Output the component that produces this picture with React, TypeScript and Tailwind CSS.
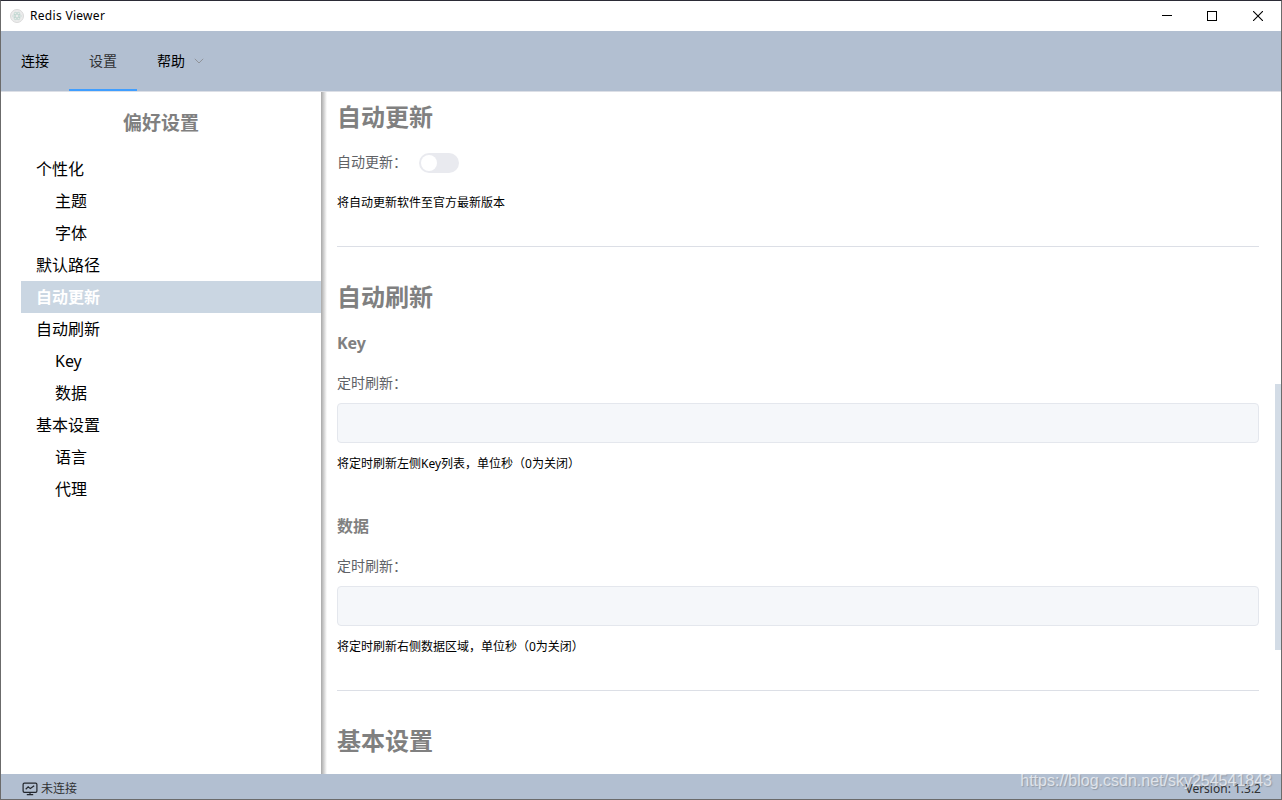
import { ReactNode } from "react";

const menus = [
    { label: "连接", active: false },
    { label: "设置", active: true },
];

const sections = [
    { label: "个性化", level: 1 },
    { label: "主题", level: 2 },
    { label: "字体", level: 2 },
    { label: "默认路径", level: 1 },
    { label: "自动更新", level: 1, active: true },
    { label: "自动刷新", level: 1 },
    { label: "Key", level: 2 },
    { label: "数据", level: 2 },
    { label: "基本设置", level: 1 },
    { label: "语言", level: 2 },
    { label: "代理", level: 2 },
];

const AppLogo = () => (
    <svg width="14" height="14" viewBox="0 0 14 14" fill="none">
        <circle cx="7" cy="7" r="6.5" fill="#ececec" stroke="#dadada" />
        <g stroke="#b9d3cc" strokeWidth="0.6">
            <ellipse cx="7" cy="7" rx="4.4" ry="1.8" />
            <ellipse cx="7" cy="7" rx="4.4" ry="1.8" transform="rotate(60 7 7)" />
            <ellipse cx="7" cy="7" rx="4.4" ry="1.8" transform="rotate(120 7 7)" />
        </g>
    </svg>
);

const MonitorIcon = () => (
    <svg width="16" height="14" viewBox="0 0 16 14" fill="none" stroke="#23272d" strokeWidth="1.2">
        <rect x="1.1" y="1.1" width="13.8" height="9.3" rx="1.3" />
        <path d="M3.7 7.3 6.2 4.9 8.3 6.6 12.2 3.8" />
        <path d="M8 10.4v2.2M4.8 12.7h6.4" />
    </svg>
);

const TitleBar = () => (
    <header className="flex h-[30px] shrink-0 items-center bg-white pl-[9px]">
        <AppLogo />
        <span className="ml-[6px] text-[12px] leading-[30px] tracking-[0.3px] text-black">Redis Viewer</span>
        <div className="ml-auto flex">
            <div className="flex h-[30px] w-[46px] items-center justify-center pl-px">
                <svg width="10" height="10" stroke="#000" shapeRendering="crispEdges">
                    <path d="M0 4.5h10" />
                </svg>
            </div>
            <div className="flex h-[30px] w-[46px] items-center justify-center">
                <svg width="10" height="10" fill="none" stroke="#000" shapeRendering="crispEdges">
                    <rect x="0.5" y="0.5" width="9" height="9" />
                </svg>
            </div>
            <div className="flex h-[30px] w-[46px] items-center justify-center">
                <svg width="10" height="10" stroke="#000" strokeWidth="1.1">
                    <path d="M0 0 10 10M10 0 0 10" />
                </svg>
            </div>
        </div>
    </header>
);

const NavBar = () => (
    <nav className="flex h-[61px] shrink-0 border-b border-[#dcdfe6] bg-[#b2bfd1] text-[14px] leading-[60px]">
        {menus.map((menu) => (
            <div
                key={menu.label}
                className={
                    menu.active
                        ? "h-[60px] border-b-2 border-[#409eff] px-5 text-[#303133]"
                        : "h-[60px] px-5 text-black"
                }
            >
                {menu.label}
            </div>
        ))}
        <div className="flex h-[60px] items-center px-5 text-black">
            帮助
            <svg className="ml-[9px]" width="10" height="6" fill="none" stroke="#909399">
                <path d="M0.8 0.8 5 5 9.2 0.8" />
            </svg>
        </div>
    </nav>
);

const Sidebar = () => (
    <aside className="w-[320px] shrink-0 bg-white pl-5">
        <h2 className="mt-[15px] mb-[14px] -ml-5 text-center text-[19px] font-bold leading-8 text-[#808080]">
            偏好设置
        </h2>
        <ul className="text-[16px] leading-8 text-black">
            {sections.map((item) => (
                <li
                    key={item.label}
                    className={
                        item.active
                            ? "h-8 bg-[#cad6e2] pl-[15px] font-bold text-white"
                            : item.level === 1
                              ? "h-8 pl-[15px]"
                              : "h-8 pl-[34px]"
                    }
                >
                    {item.label}
                </li>
            ))}
        </ul>
    </aside>
);

const Title = ({ children }: { children: ReactNode }) => (
    <h1 className="text-[24px] font-bold leading-8 text-[#808080]">{children}</h1>
);

const IntervalField = ({ title, hint }: { title: string; hint: string }) => (
    <div>
        <h3 className="text-[16px] font-bold leading-6 text-[#808080]">{title}</h3>
        <div className="mt-2 text-[14px] leading-10 text-[#606266]">定时刷新：</div>
        <input
            disabled
            className="block h-10 w-full rounded-[4px] border border-[#e4e7ed] bg-[#f5f7fa]"
        />
        <p className="mt-[11px] text-[12px] leading-5 text-black">{hint}</p>
    </div>
);

const Preferences = () => (
    <main className="min-w-0 flex-1 overflow-hidden pt-[9px] pr-4 pl-[10px]">
        <Title>自动更新</Title>
        <div className="mt-[9px] flex h-10 items-center text-[14px] leading-10 text-[#606266]">
            <span className="w-[82px]">自动更新：</span>
            <span className="mt-px flex h-5 w-10 items-center rounded-full bg-[#e9eaef] pl-[2px]">
                <span className="size-4 rounded-full bg-white" />
            </span>
        </div>
        <p className="mt-[11px] text-[12px] leading-5 text-black">将自动更新软件至官方最新版本</p>
        <hr className="mt-[33px] mb-[34px] border-[#dcdfe6]" />

        <Title>自动刷新</Title>
        <div className="mt-[18px]">
            <IntervalField title="Key" hint="将定时刷新左侧Key列表，单位秒（0为关闭）" />
        </div>
        <div className="mt-[40px]">
            <IntervalField title="数据" hint="将定时刷新右侧数据区域，单位秒（0为关闭）" />
        </div>
        <hr className="mt-[33px] mb-[34px] border-[#dcdfe6]" />

        <Title>基本设置</Title>
    </main>
);

const StatusBar = () => (
    <footer className="relative flex h-[25px] shrink-0 items-center bg-[#b2bfd1] pr-[20px] pl-[21px] pt-[4px] text-[12px] text-[#303133]">
        <MonitorIcon />
        <span className="ml-[3px] pt-px">未连接</span>
        <span className="ml-auto pt-px">Version: 1.3.2</span>
        <span className="absolute top-[-4px] right-[9px] font-['Liberation_Sans',sans-serif] text-[16px] leading-[22px] text-white/65 [text-shadow:1px_1px_1px_rgba(90,90,90,0.35)]">
            https://blog.csdn.net/sky254541843
        </span>
    </footer>
);

export default function App() {
    return (
        <div className="flex h-[800px] w-[1282px] flex-col overflow-hidden border border-[#6b6b6b] border-t-[#2b2b36] bg-white font-['Noto_Sans','Noto_Sans_CJK_SC',sans-serif]">
            <TitleBar />
            <NavBar />
            <div className="flex h-[682px] shrink-0">
                <Sidebar />
                <div className="w-[6px] shrink-0 bg-linear-to-r from-[#a8a8a8] to-white" />
                <Preferences />
                {/* scrollbar */}
                <div className="w-[6px] shrink-0 pt-[292px]">
                    <div className="h-[266px] bg-[#d3dce6]" />
                </div>
            </div>
            <StatusBar />
        </div>
    );
}
